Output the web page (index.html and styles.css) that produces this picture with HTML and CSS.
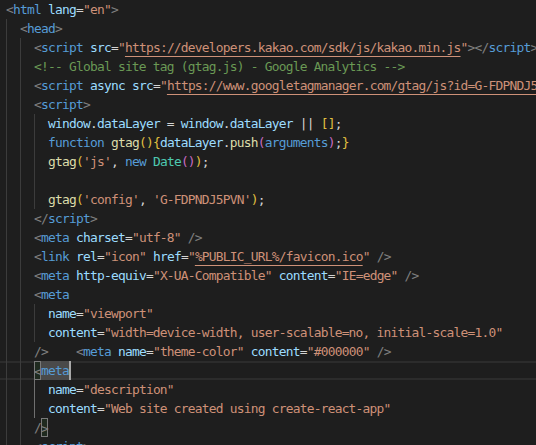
FILE: index.html
```html
<!DOCTYPE html>
<html lang="en">
<head>
<meta charset="utf-8">
<link rel="stylesheet" href="styles.css">
</head>
<body>
<div class="editor">
<div class="ln"><span class="t">&lt;</span><span class="tn">html</span> <span class="an">lang</span>=<span class="s">"en"</span><span class="t">&gt;</span></div>
<div class="ln"><span class="g"></span><span class="t">&lt;</span><span class="tn">head</span><span class="t">&gt;</span></div>
<div class="ln"><span class="g"></span><span class="g"></span><span class="t">&lt;</span><span class="tn">script</span> <span class="an">src</span>=<span class="s">"<span class="u">https://developers.kakao.com/sdk/js/kakao.min.js</span>"</span><span class="t">&gt;&lt;/</span><span class="tn">script</span><span class="t">&gt;</span></div>
<div class="ln"><span class="g"></span><span class="g"></span><span class="c">&lt;!-- Global site tag (gtag.js) - Google Analytics --&gt;</span></div>
<div class="ln"><span class="g"></span><span class="g"></span><span class="t">&lt;</span><span class="tn">script</span> <span class="an">async</span> <span class="an">src</span>=<span class="s">"<span class="u">https://www.googletagmanager.com/gtag/js?id=G-FDPNDJ5PVN</span>"</span><span class="t">&gt;&lt;/</span><span class="tn">script</span><span class="t">&gt;</span></div>
<div class="ln"><span class="g"></span><span class="g"></span><span class="t">&lt;</span><span class="tn">script</span><span class="t">&gt;</span></div>
<div class="ln"><span class="g"></span><span class="g"></span><span class="g"></span><span class="v">window</span>.<span class="v">dataLayer</span> = <span class="v">window</span>.<span class="v">dataLayer</span> || <span class="b1">[]</span>;</div>
<div class="ln"><span class="g"></span><span class="g"></span><span class="g"></span><span class="k">function</span> <span class="f">gtag</span><span class="b1">(){</span><span class="v">dataLayer</span>.<span class="f">push</span><span class="b2">(</span><span class="k">arguments</span><span class="b2">)</span>;<span class="b1">}</span></div>
<div class="ln"><span class="g"></span><span class="g"></span><span class="g"></span><span class="f">gtag</span><span class="b1">(</span><span class="s">'js'</span>, <span class="k">new</span> <span class="cl">Date</span><span class="b2">()</span><span class="b1">)</span>;</div>
<div class="ln"><span class="g"></span><span class="g"></span><span class="g"></span></div>
<div class="ln"><span class="g"></span><span class="g"></span><span class="g"></span><span class="f">gtag</span><span class="b1">(</span><span class="s">'config'</span>, <span class="s">'G-FDPNDJ5PVN'</span><span class="b1">)</span>;</div>
<div class="ln"><span class="g"></span><span class="g"></span><span class="t">&lt;/</span><span class="tn">script</span><span class="t">&gt;</span></div>
<div class="ln"><span class="g"></span><span class="g"></span><span class="t">&lt;</span><span class="tn">meta</span> <span class="an">charset</span>=<span class="s">"utf-8"</span> <span class="t">/&gt;</span></div>
<div class="ln"><span class="g"></span><span class="g"></span><span class="t">&lt;</span><span class="tn">link</span> <span class="an">rel</span>=<span class="s">"icon"</span> <span class="an">href</span>=<span class="s">"<span class="u">%PUBLIC_URL%/favicon.ico</span>"</span> <span class="t">/&gt;</span></div>
<div class="ln"><span class="g"></span><span class="g"></span><span class="t">&lt;</span><span class="tn">meta</span> <span class="an">http-equiv</span>=<span class="s">"X-UA-Compatible"</span> <span class="an">content</span>=<span class="s">"IE=edge"</span> <span class="t">/&gt;</span></div>
<div class="ln"><span class="g"></span><span class="g"></span><span class="t">&lt;</span><span class="tn">meta</span></div>
<div class="ln"><span class="g"></span><span class="g"></span><span class="g"></span><span class="an">name</span>=<span class="s">"viewport"</span></div>
<div class="ln"><span class="g"></span><span class="g"></span><span class="g"></span><span class="an">content</span>=<span class="s">"width=device-width, user-scalable=no, initial-scale=1.0"</span></div>
<div class="ln"><span class="g"></span><span class="g"></span><span class="t">/&gt;</span>    <span class="t">&lt;</span><span class="tn">meta</span> <span class="an">name</span>=<span class="s">"theme-color"</span> <span class="an">content</span>=<span class="s">"#000000"</span> <span class="t">/&gt;</span></div>
<div class="ln cur"><span class="g"></span><span class="g"></span><span class="t bm">&lt;</span><span class="tn sel">meta</span><span class="caret"></span></div>
<div class="ln"><span class="g"></span><span class="g"></span><span class="g act"></span><span class="an">name</span>=<span class="s">"description"</span></div>
<div class="ln"><span class="g"></span><span class="g"></span><span class="g act"></span><span class="an">content</span>=<span class="s">"Web site created using create-react-app"</span></div>
<div class="ln"><span class="g"></span><span class="g"></span><span class="t">/</span><span class="t bm">&gt;</span></div>
<div class="ln"><span class="g"></span><span class="g"></span><span class="t">&lt;</span><span class="tn">script</span><span class="t">&gt;</span></div>
</div>
</body>
</html>
```
FILE: styles.css
```css
html, body {
  margin: 0;
  padding: 0;
  background: #1e1e1e;
}
body {
  width: 536px;
  height: 445px;
  overflow: hidden;
}
.editor {
  padding-left: 6px;
  font-family: "DejaVu Sans Mono", "Liberation Mono", monospace;
  font-size: 12.9px;
  letter-spacing: -0.77px;
  color: #d4d4d4;
  overflow: hidden;
}
.ln {
  height: 19px;
  line-height: 19px;
  white-space: pre;
}
.cur {
  box-shadow: inset 0 2px #2c2c2c, inset 0 -2px #2c2c2c;
  margin-left: -6px;
  padding-left: 6px;
}
.g {
  display: inline-block;
  width: 14px;
  height: 19px;
  vertical-align: top;
  border-left: 1px solid #3c3c3c;
  box-sizing: border-box;
}
.g.act {
  border-left-color: #707070;
}
.t { color: #808080; }
.tn { color: #569cd6; }
.an { color: #9cdcfe; }
.s { color: #ce9178; }
.u { text-decoration: underline; text-underline-offset: 4px; text-decoration-skip-ink: none; }
.c { color: #6a9955; }
.v { color: #9cdcfe; }
.k { color: #569cd6; }
.f { color: #dcdcaa; }
.cl { color: #4ec9b0; }
.b1 { color: #e0c040; }
.b2 { color: #c86cc4; }
.bm {
  display: inline-block;
  height: 19px;
  vertical-align: top;
  box-sizing: border-box;
  border: 1px solid #7a7a7a;
  background: #1f2a1f;
  width: 7px;
  text-indent: -1px;
}
.sel {
  display: inline-block;
  height: 19px;
  vertical-align: top;
  background: #4a4a4a;
}
.caret {
  display: inline-block;
  width: 2px;
  height: 19px;
  vertical-align: top;
  margin-right: -2px;
  background: #a8a8a8;
}
```
